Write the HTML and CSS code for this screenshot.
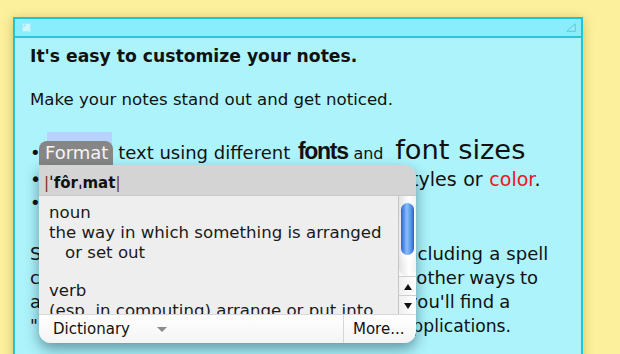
FILE: index.html
```html
<!DOCTYPE html>
<html lang="en">
<head>
    <meta charset="UTF-8">
    <meta name="viewport" content="width=device-width, initial-scale=1.0">
    <title>Stickies</title>
    <link rel="stylesheet" href="styles.css">
</head>
<body>
    <div class="note">
        <div class="note-bar">
            <svg class="close-box" width="9" height="9" viewBox="0 0 9 9">
                <rect x="0.5" y="0.5" width="8" height="8" fill="#c9f7fd" stroke="#a6ecf7"/>
                <path d="M3 0.5 V3 H0.5" fill="none" stroke="#8fe2ef"/>
            </svg>
            <svg class="zoom-box" width="10" height="9" viewBox="0 0 10 9">
                <path d="M0.8 8.3 L9.3 0.8 V8.3 Z" fill="#9ee9f6" stroke="#4fcfe2"/>
            </svg>
        </div>
        <div class="note-body">
            <p class="title">It's easy to customize your notes.</p>
            <p class="lead">Make your notes stand out and get noticed.</p>
            <div class="item big-line"><span class="bullet">•</span><span class="selected">Format</span> text using different <span class="fancy">fonts</span> <span class="small">and</span> <span class="large">font sizes</span></div>
            <div class="item styles-line"><span class="bullet">•</span>Use bold, italic, underline, and other styles or <span class="red">color</span>.</div>
            <div class="item"><span class="bullet">•</span>Paste pictures and movies into a note.</div>
            <p class="features">
                <span class="ln1">Stickies has many other useful features, including a spell</span><br>
                <span class="ln2">checker, find and replace, fonts, and many other ways to</span><br>
                <span class="ln3">arrange your notes. In the Services menu you'll find a</span><br>
                <span class="ln4">"Make New Sticky Note" service for other applications.</span>
            </p>
        </div>

        <div class="lookup">
            <div class="lookup-tab">Format</div>
            <div class="lookup-panel">
                <div class="pron"><span class="bar">|</span>ˈfôrˌmat<span class="bar">|</span></div>
                <div class="defs">
                    <div class="defs-text">
                        <div>noun</div>
                        <div>the way in which something is arranged</div>
                        <div class="wrap">or set out</div>
                        <div class="gap">verb</div>
                        <div>(esp. in computing) arrange or put into</div>
                    </div>
                    <div class="scroller">
                        <div class="track"><div class="thumb"></div></div>
                        <div class="arrow up"></div>
                        <div class="arrow down"></div>
                    </div>
                </div>
                <div class="lookup-foot">
                    <div class="source">Dictionary <span class="caret"></span></div>
                    <div class="more">More...</div>
                </div>
            </div>
        </div>
    </div>
</body>
</html>
```

FILE: styles.css
```css
body {
    margin: 0;
    padding: 17px 0 0 13px;
    height: 354px;
    box-sizing: border-box;
    overflow: hidden;
    background: #fcf09c;
    font-family: "DejaVu Sans", sans-serif;
    color: #111;
}

.note {
    position: relative;
    width: 566px;
    height: 420px;
    border: 2px solid #22c3d6;
    background: #adf3fc;
    box-shadow: 0 2px 10px rgba(120, 100, 0, 0.35);
}

.note-bar {
    height: 17px;
    background: #8aedfc;
    border-bottom: 2px solid #2ac6d8;
    display: flex;
    justify-content: space-between;
    align-items: center;
    padding: 0 5px 0 7px;
}

.note-body {
    padding: 6px 15px 0 15px;
    font-size: 18px;
    line-height: 24px;
    white-space: nowrap;
}

.note-body p {
    margin: 0;
}

.title {
    font-size: 17.2px;
    font-weight: bold;
}

.lead {
    font-size: 16.6px;
    margin-top: 20px !important;
}

.bullet {
    display: inline-block;
    width: 15px;
}

.big-line {
    margin-top: 26px;
}

.styles-line {
    font-size: 19px;
    word-spacing: 0.6px;
    margin-top: 1px;
}

.selected {
    background: #b7d3fc;
    margin-left: 2px;
    padding: 10px 2px 0 0;
}

.fancy {
    font-family: "Liberation Sans", sans-serif;
    font-weight: bold;
    font-size: 23px;
    letter-spacing: -1.3px;
    margin-left: 2px;
}

.small {
    font-size: 16px;
}

.large {
    font-size: 27.3px;
    margin-left: 6px;
}

.red {
    color: #f0141e;
}

.features {
    margin-top: 27px !important;
    line-height: 24px;
}

.ln1 { word-spacing: 0.4px; }
.ln2 { word-spacing: -0.8px; }
.ln3 { word-spacing: -0.5px; }
.ln4 { font-size: 17.2px; word-spacing: 1.7px; }

/* dictionary popup */

.lookup {
    position: absolute;
    left: 24px;
    top: 122px;
    width: 377px;
    font-size: 16.6px;
}

.lookup-tab {
    width: 68px;
    height: 24px;
    padding-left: 6px;
    background: #868686;
    border-radius: 8px 8px 0 0;
    color: #f4f4f4;
    font-size: 18px;
    line-height: 24px;
}

.lookup-panel {
    border-radius: 0 12px 12px 12px;
    overflow: hidden;
    box-shadow: 0 6px 14px rgba(0, 40, 50, 0.45);
}

.pron {
    height: 24px;
    padding: 6px 0 0 5px;
    background: #d4d4d4;
    font-size: 15px;
    font-weight: bold;
    line-height: 24px;
    color: #111;
}

.pron .bar {
    color: #7a2a2a;
    font-weight: normal;
}

.defs {
    height: 118px;
    display: flex;
    background: #eeeeee;
    border-top: 1px solid #c8c8c8;
}

.defs-text {
    flex: 1;
    overflow: hidden;
    padding: 7px 0 0 10px;
    line-height: 20px;
    color: #1a1a1a;
}

.defs-text .wrap {
    padding-left: 16px;
}

.defs-text .gap {
    margin-top: 18px;
}

.scroller {
    width: 17px;
    display: flex;
    flex-direction: column;
    background: #fafafa;
    border-left: 1px solid #c4c4c4;
}

.track {
    height: 77px;
    padding: 7px 2px 0 2px;
    background: linear-gradient(to right, #e4e4e4, #ffffff 60%, #f2f2f2);
    border-bottom-left-radius: 8px;
    border-bottom-right-radius: 8px;
}

.thumb {
    height: 52px;
    border-radius: 7px;
    background: linear-gradient(to right, #2a62d4, #8cbff6 45%, #5b95ea 75%, #2a5fcf);
    box-shadow: 0 8px 6px -2px #ffffff;
}

.arrow {
    height: 19px;
    position: relative;
    border-top: 1px solid #d0d0d0;
    background: linear-gradient(to right, #f0f0f0, #ffffff);
}

.arrow::after {
    content: "";
    position: absolute;
    left: 5px;
    top: 7px;
    border-left: 4px solid transparent;
    border-right: 4px solid transparent;
}

.arrow.up::after {
    border-bottom: 6px solid #111;
}

.arrow.down::after {
    border-top: 6px solid #111;
}

.lookup-foot {
    height: 28px;
    display: flex;
    background: linear-gradient(#ffffff, #f4f4f4);
    border-top: 1px solid #d8d8d8;
    font-size: 15px;
    line-height: 28px;
    color: #111;
}

.source {
    flex: 1;
    padding-left: 14px;
    border-right: 1px solid #d6d6d6;
}

.caret {
    display: inline-block;
    margin-left: 22px;
    border-left: 5px solid transparent;
    border-right: 5px solid transparent;
    border-top: 5px solid #8a8a8a;
    vertical-align: middle;
}

.more {
    width: 63px;
    padding-left: 9px;
}
```
